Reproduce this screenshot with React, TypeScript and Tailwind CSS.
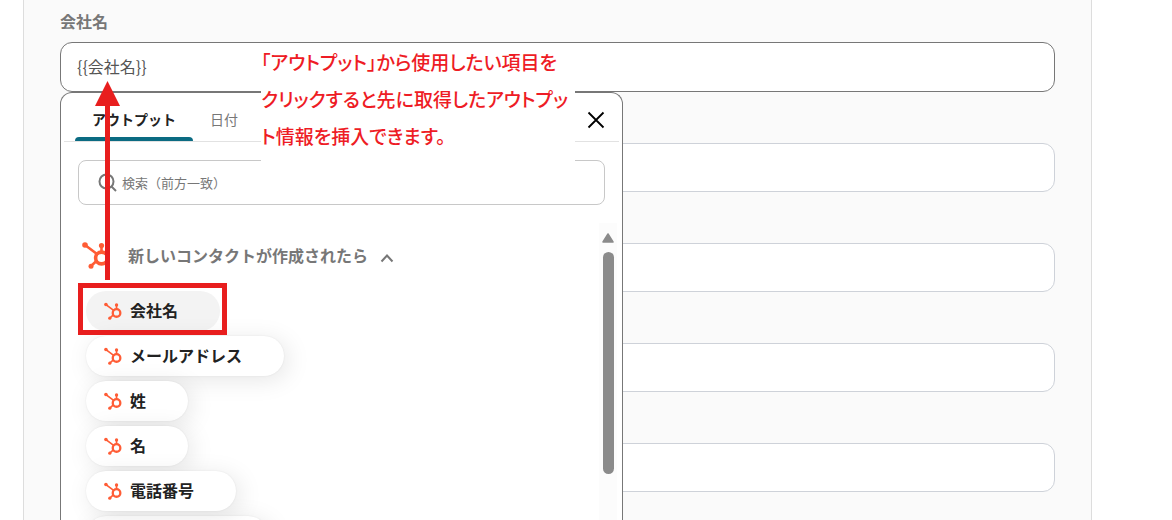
import { useState } from "react";
import { clsx } from "clsx";

const tabs = ["アウトプット", "日付"];

const outputs = ["会社名", "メールアドレス", "姓", "名", "電話番号"];

const otherFields = ["field-2", "field-3", "field-4", "field-5"];

const HubSpotIcon = ({ className }: { className: string }) => (
  <svg
    viewBox="0 0 28 28"
    className={clsx("shrink-0 text-[#ff5c35]", className)}
    fill="currentColor"
    stroke="currentColor"
    aria-hidden="true"
  >
    <path d="M3 4 15 13M19.500 4v8M9 25l6-5.500" strokeWidth="2.6" />
    <circle cx="3" cy="4" r="2.8" stroke="none" />
    <circle cx="19.500" cy="4.500" r="2.6" stroke="none" />
    <circle cx="9" cy="25.200" r="2.500" stroke="none" />
    <circle cx="19.500" cy="17" r="5.900" strokeWidth="3.600" fill="none" />
  </svg>
);

const SearchIcon = () => (
  <svg
    viewBox="0 0 20 20"
    className="size-5 shrink-0 text-[#777]"
    fill="none"
    stroke="currentColor"
    strokeWidth="2"
    aria-hidden="true"
  >
    <circle cx="8.5" cy="8.5" r="7" />
    <path d="M13.5 13.5 18 18" />
  </svg>
);

const CloseIcon = () => (
  <svg
    viewBox="0 0 18 18"
    className="size-[18px]"
    fill="none"
    stroke="currentColor"
    strokeWidth="1.8"
    aria-hidden="true"
  >
    <path d="M1.5 1.5 16.5 16.5M16.5 1.5 1.5 16.5" />
  </svg>
);

const Arrow = () => (
  <svg
    viewBox="0 0 26 200"
    className="pointer-events-none absolute left-[34px] top-[39px] z-20 h-[200px] w-[26px] text-[#e81e1e]"
    fill="currentColor"
    aria-hidden="true"
  >
    <path d="M13.5 0 26 25H16V199H11V25H1z" />
  </svg>
);

const ScrollBar = () => (
  <div className="flex w-[18px] flex-col items-center bg-[#fcfcfc] pt-[10px]">
    <svg viewBox="0 0 12 10" className="h-[10px] w-3" aria-hidden="true">
      <path
        d="M6 1 11 9H1z"
        fill="#8b8b8b"
        stroke="#8b8b8b"
        strokeWidth="1.5"
        strokeLinejoin="round"
      />
    </svg>
    <div className="mt-[9px] h-[222px] w-[11px] rounded-full bg-[#8b8b8b]" />
  </div>
);

const OutputPicker = ({ onPick }: { onPick: (name: string) => void }) => {
  const [activeTab, setActiveTab] = useState(tabs[0]);
  const [query, setQuery] = useState("");

  return (
    <div className="absolute left-0 top-full z-10 w-[563px] rounded-t-xl border border-b-0 border-[#777] bg-white">
      {/* Tabs */}
      <div className="mx-[3px] flex h-[49px] items-end border-b border-[#e2e2e2] pl-[11px]">
        {tabs.map((tab) => (
          <button
            key={tab}
            type="button"
            onClick={() => setActiveTab(tab)}
            className="flex flex-col text-sm"
          >
            <span
              className={clsx(
                "px-[17px] pb-2",
                tab === activeTab ? "font-bold text-[#222]" : "text-[#777]",
              )}
            >
              {tab}
            </span>
            <span
              className={clsx(
                "h-1 w-full rounded-t",
                tab === activeTab && "bg-[#0b6b82]",
              )}
            />
          </button>
        ))}
        <button
          type="button"
          aria-label="閉じる"
          className="mb-3 ml-auto mr-[14px] text-black"
        >
          <CloseIcon />
        </button>
      </div>

      {/* Search */}
      <label className="mx-[17px] mt-[18px] flex h-[45px] items-center gap-1 rounded-lg border border-[#c8c8c8] pl-[19px]">
        <SearchIcon />
        <input
          type="text"
          value={query}
          onChange={(e) => setQuery(e.target.value)}
          placeholder="検索（前方一致）"
          aria-label="検索"
          className="w-full bg-transparent text-[13px] outline-none placeholder:text-[#777]"
        />
      </label>

      {/* Output list */}
      <div className="mr-[5px] mt-[18px] flex h-[340px]">
        <div className="flex-1 overflow-hidden pl-[17px]">
          <button
            type="button"
            className="mt-3 flex h-10 items-center font-bold text-[#777]"
          >
            <HubSpotIcon className="ml-1 size-7" />
            <span className="ml-[18px]">新しいコンタクトが作成されたら</span>
            <svg
              viewBox="0 0 14 10"
              className="ml-[12px] mt-[6px] h-[10px] w-[14px]"
              fill="none"
              stroke="currentColor"
              strokeWidth="2"
              aria-hidden="true"
            >
              <path d="M1.5 8.5 7 2.5 12.5 8.5" />
            </svg>
          </button>

          <ul className="ml-2 mt-4 flex flex-col items-start gap-[5px]">
            {outputs.map((name, i) => (
              <li key={name} className="relative">
                <button
                  type="button"
                  onClick={() => onPick(name)}
                  className={clsx(
                    "flex h-10 items-center gap-2 rounded-full pl-[18px] pr-[42px] font-bold text-[#222]",
                    i === 0
                      ? "bg-[#f3f3f3]"
                      : "bg-white shadow-[0_0_2px_rgba(0,0,0,0.08),4px_4px_24px_rgba(0,0,0,0.1)]",
                  )}
                >
                  <HubSpotIcon className="size-[18px]" />
                  <span className="pb-[3px]">{name}</span>
                </button>
                {i === 0 && (
                  <span className="pointer-events-none absolute -bottom-1 -left-2 -right-[7px] -top-2 z-10 border-[5px] border-[#e81e1e]" />
                )}
              </li>
            ))}
            <li className="h-10 w-[182px] rounded-full bg-white shadow-[0_0_2px_rgba(0,0,0,0.08),4px_4px_24px_rgba(0,0,0,0.1)]" />
          </ul>
        </div>
        <ScrollBar />
      </div>
    </div>
  );
};

const Note = () => (
  <p className="absolute left-[201px] top-px z-20 h-[122px] w-[314px] whitespace-nowrap bg-white text-[19px] font-medium leading-[37px] text-[#ee1c25] [font-feature-settings:'palt']">
    「アウトプット」から使用したい項目を
    <br />
    クリックすると先に取得したアウトプッ
    <br />
    ト情報を挿入できます。
  </p>
);

const App = () => {
  const [company, setCompany] = useState("{{会社名}}");

  return (
    <div className="h-screen overflow-hidden bg-white font-['Noto_Sans_CJK_JP',sans-serif] text-base">
      <form className="ml-[23px] mr-20 flex min-h-full flex-col gap-[51px] border-x border-[#ddd] bg-[#fafafa] px-9 pt-[9px]">
        <div className="flex flex-col gap-[9px]">
          <label htmlFor="company" className="font-bold text-[#777]">
            会社名
          </label>
          <div className="relative">
            <input
              id="company"
              type="text"
              value={company}
              onChange={(e) => setCompany(e.target.value)}
              className="block h-[50px] w-full rounded-xl border border-[#777] bg-white px-4 pb-[3px] text-[#555] outline-none"
            />
            <OutputPicker onPick={(name) => setCompany(`{{${name}}}`)} />
            <Note />
            <Arrow />
          </div>
        </div>

        {otherFields.map((id) => (
          <input
            key={id}
            type="text"
            aria-label={id}
            className="h-[49px] w-full rounded-xl border border-[#ced2d9] bg-white px-4 outline-none"
          />
        ))}
      </form>
    </div>
  );
};

export default App;
